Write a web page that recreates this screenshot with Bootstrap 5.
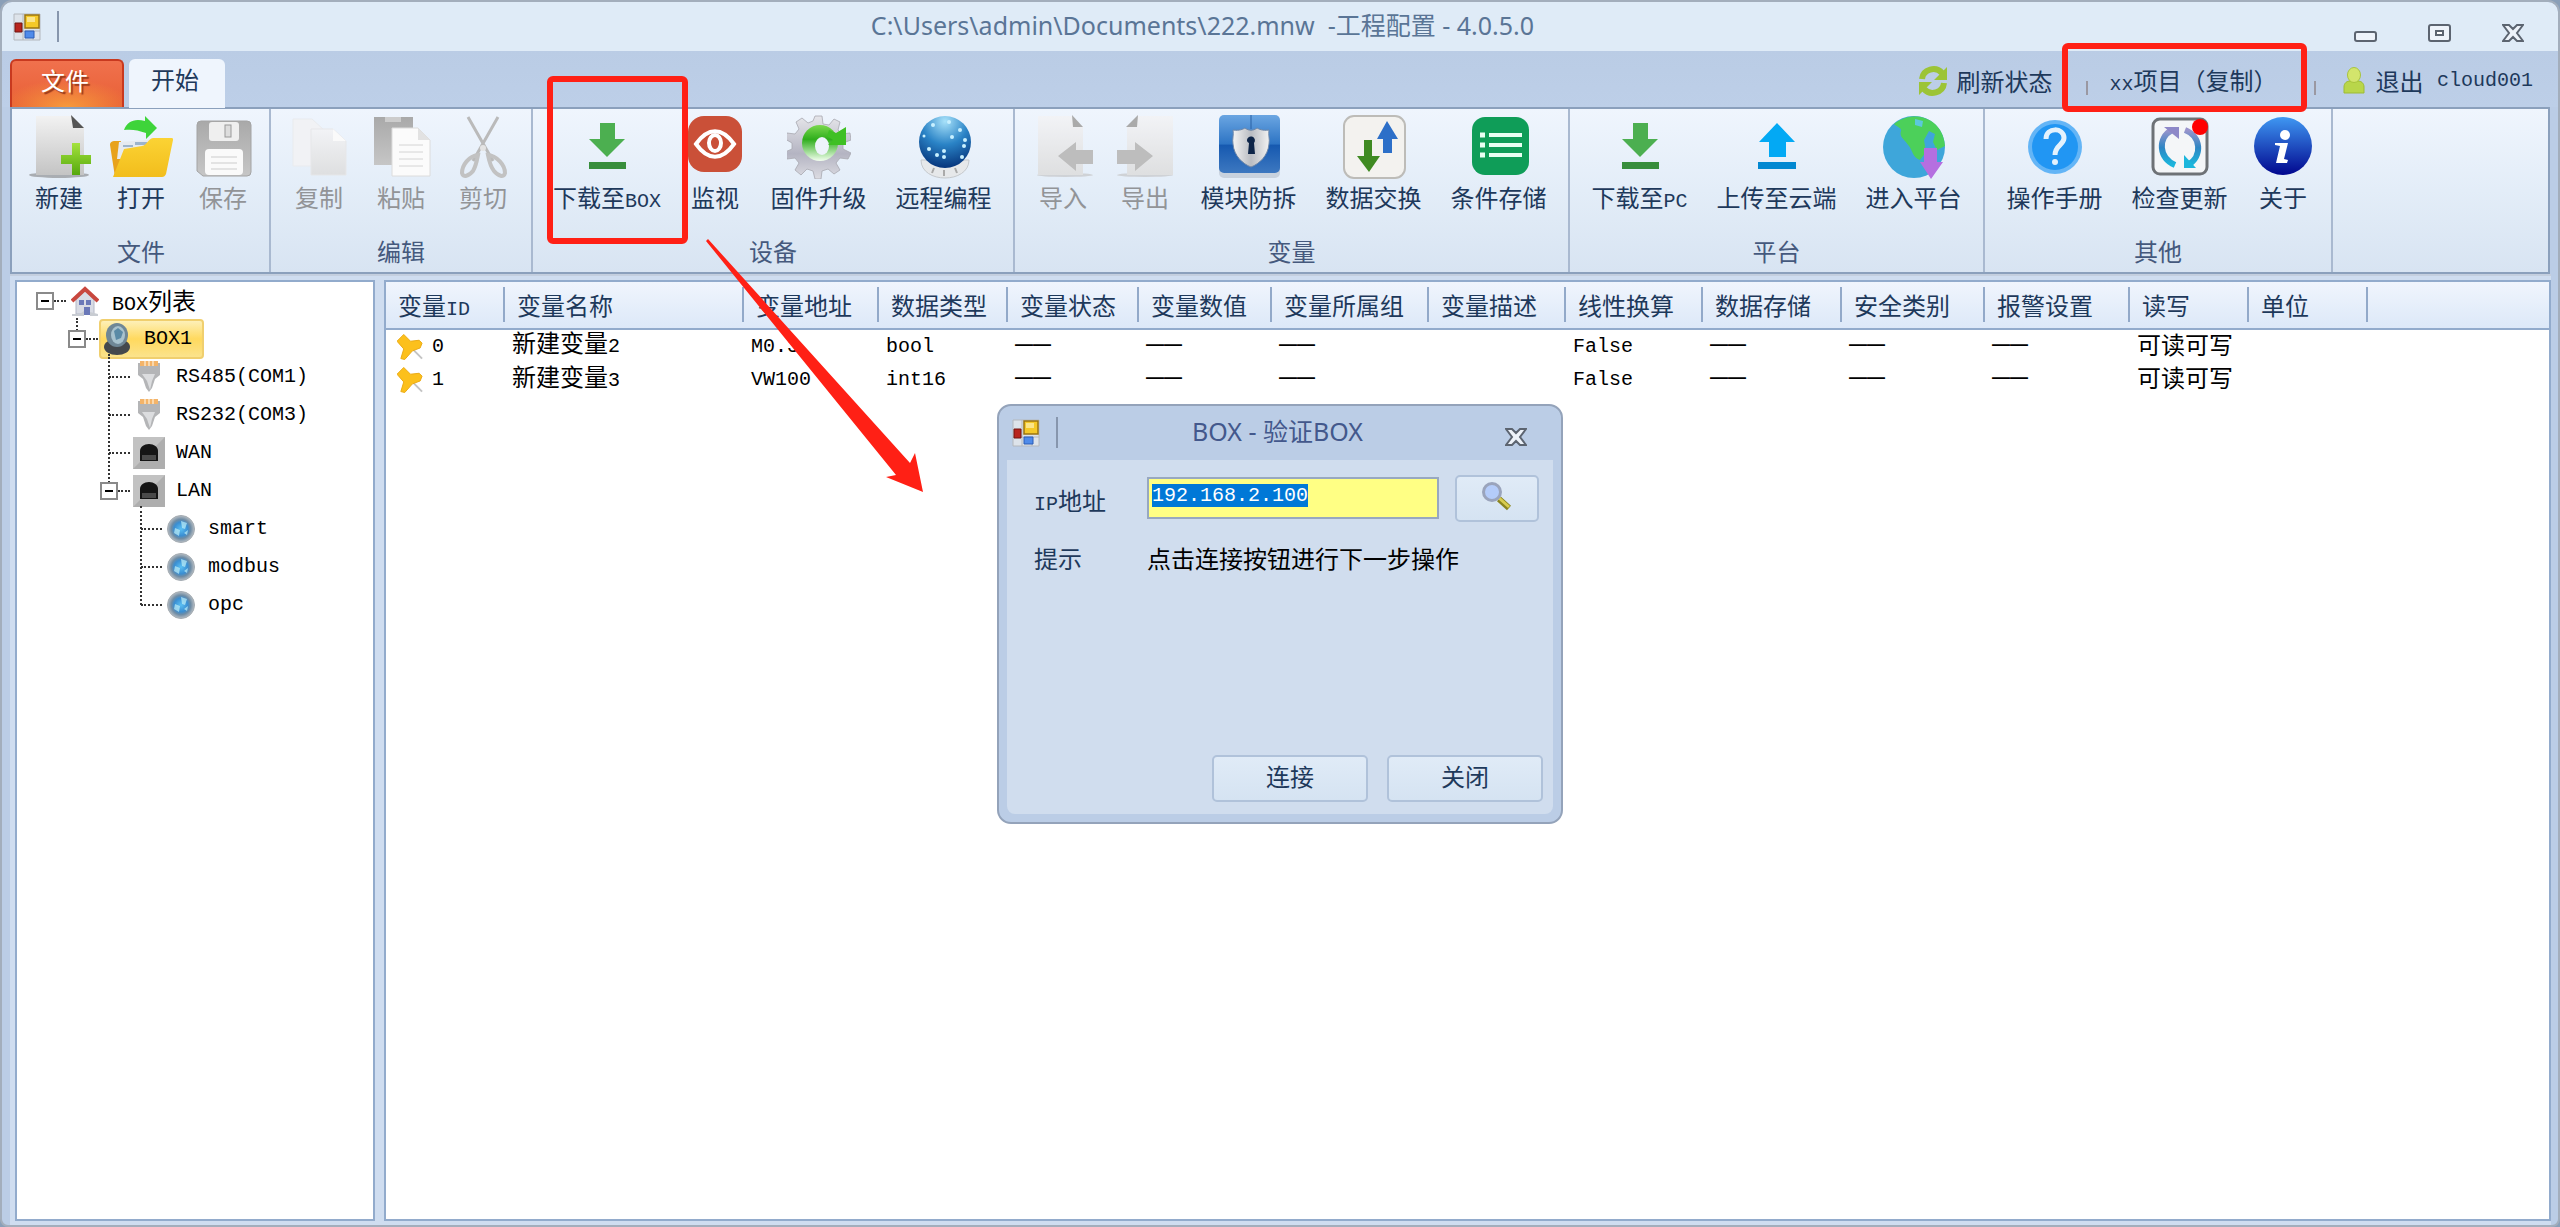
<!DOCTYPE html>
<html lang="zh-CN">
<head>
<meta charset="utf-8">
<meta name="viewport" content="width=device-width, initial-scale=1">
<title>工程配置 - 4.0.5.0</title>
<link rel="stylesheet" href="https://cdn.jsdelivr.net/npm/bootstrap@5.3.0/dist/css/bootstrap.min.css">
<style>
  :root { --ink:#1e395b; --line:#8ba0bc; --frame:#bbcde6; --soft:#cfddf0; --mark:#ff2015; }
  body { font-family:"Noto Sans CJK SC",sans-serif; font-size:24px; line-height:24px; color:var(--ink); background:#8a9fb8; }
  button { font:inherit; color:inherit; background:none; border:0; padding:0; }
  svg { display:block; flex:none; }
  .lat { font-family:"Liberation Mono",monospace; font-size:20px; line-height:20px; }
  .app-window { background:var(--frame); border:2px solid #a3aebc; border-radius:12px 12px 8px 8px; }
  .title-bar { height:49px; background:#dfebf7; border-radius:10px 10px 0 0; padding:0 34px 0 11px; }
  .title-text { font-family:"Noto Sans","Noto Sans CJK SC",sans-serif; font-size:25px; color:#5a7596; white-space:pre; padding:0 8px 4px 0; }
  .grip { width:2px; height:31px; background:#8796ad; }
  .win-btns { gap:50px; padding-top:12px; }
  .tab-row { height:56px; background:linear-gradient(#bacce5,#bdcfe8); padding:8px 25px 0 8px; }
  .file-tab { width:114px; height:48px; color:#fff; text-shadow:2px 2px 1px #9a3a1a; border:2px solid #c8391f; border-bottom:0; border-radius:6px 6px 0 0; background:radial-gradient(ellipse 60% 60% at 50% 100%,#f79a3c,transparent),linear-gradient(#f0714d,#e85f35); padding:0 4px 8px 0; }
  .home-tab { width:96px; height:49px; background:#eff5fd; border-radius:6px 6px 0 0; margin-left:5px; padding:0 4px 10px 0; position:relative; z-index:1; }
  .user-area { padding-bottom:4px; }
  .sep { width:2px; height:14px; background:#9a98a2; margin-top:14px; }
  .refresh { margin-right:33px; }
  .callout { position:absolute; border:6px solid var(--mark); border-radius:6px; pointer-events:none; z-index:5; }
  .project-name { position:relative; margin:0 36px 0 22px; }
  .project-name .callout { inset:-25px -29px -17px -48px; }
  .ribbon { height:167px; margin:0 8px; border:2px solid var(--line); background:linear-gradient(#eff5fd,#e3edf8 50%,#d8e4f2); }
  .tool-group { flex:none; border-right:2px solid #a9b9d0; padding:6px 7px 9px; }
  .tool-group:first-child { padding-left:6px; padding-right:5px; }
  .tool { width:82px; height:120px; position:relative; white-space:nowrap; display:flex; flex-direction:column; align-items:center; gap:6px; }
  .tool:disabled { color:#929497; }
  .tool.wide { width:125px; }
  .tool.box-tool { width:134px; }
  .tool.cloud-tool { width:149px; }
  .tool .callout { inset:-39px -14px -9px 7px; }
  .caption { color:#45597d; }
  .work { background:var(--soft); margin:0 7px 0 8px; padding:4px 0 4px 5px; gap:9px; border-top:2px solid #c4cfdf; }
  .pane { background:#fff; border:2px solid #92abcc; }
  .tree-pane { width:360px; flex:none; }
  .tree-row { height:38px; color:#000; padding-left:19px; }
  .tree-row .expander { width:18px; height:18px; border:2px solid #8a8a8a; background:#fff; position:relative; flex:none; z-index:1; }
  .expander::after { content:""; position:absolute; left:3px; right:3px; top:6px; height:2px; background:#000; }
  .stub { width:12px; border-top:2px dotted #333; margin-right:3px; flex:none; }
  .leaf-stub { width:21px; margin-left:9px; }
  .node-icon { width:32px; flex:none; display:flex; justify-content:center; margin-right:11px; }
  .branch { margin-left:32px; position:relative; }
  .branch::before { content:""; position:absolute; left:27px; width:0; top:-4px; border-left:2px dotted #333; }
  .branch.b1::before { height:16px; top:-2px; }
  .branch.b2::before { height:133px; }
  .branch.b3::before { height:99px; }
  .chosen { background:linear-gradient(#fdf0b8,#ffd95e 50%,#fbe38c); border:2px solid #f0cf6e; border-radius:4px; height:40px; padding-right:10px; margin-left:-2px; }
  .var-table { table-layout:fixed; width:100%; border-collapse:collapse; }
  .var-table thead { background:linear-gradient(#f0f5fd,#dce8f8); }
  .var-table tr.heads { border-bottom:2px solid #92abcc; }
  .var-table th { font-weight:400; padding:5px 0 6px; height:46px; white-space:nowrap; }
  .var-table th div { border-right:2px solid #92a9c9; height:35px; line-height:35px; padding-left:12px; }
  .var-table th:last-child div { border:0; }
  .var-table td { color:#000; height:34px; padding:0 0 6px 7px; white-space:nowrap; }
  .var-table td.lat, .var-table td.mark-cell { padding-bottom:0; }
  .var-table .dash { font-family:"Liberation Sans",sans-serif; font-size:18px; font-weight:700; }
  .dialog-box { width:566px; height:420px; background:var(--frame); border:2px solid #94a3ba; border-radius:14px; padding:0 8px 8px; z-index:6; display:flex; flex-direction:column; }
  .dialog-top { height:54px; padding:0 26px 0 5px; }
  .dialog-top .title-text { color:#43588c; }
  .dialog-main { background:#d0ddee; padding:15px 10px 12px 27px; border-radius:0 0 8px 8px; }
  .dialog-main .tag { width:113px; flex:none; }
  .dialog-main label.tag { padding-top:6px; }
  .ip-input { width:292px; height:42px; border:2px solid #98a8c0; background:#ffff84; padding:0 3px 5px; line-height:24px; color:#000; outline:0; }
  .ip-input::selection { background:#0078d7; color:#fff; }
  .flat-btn { height:47px; border:2px solid #b0c2da; border-radius:5px; background:linear-gradient(#e0ebf7,#d5e3f2); padding-bottom:4px; }
  .find-btn { width:84px; }
  .act-btn { width:156px; }
  .act-row { gap:19px; }
  .arrow-mark { position:absolute; left:698px; top:228px; z-index:5; pointer-events:none; }
</style>
<script src="https://cdn.jsdelivr.net/npm/bootstrap@5.3.0/dist/js/bootstrap.bundle.min.js"></script>
</head>
<body>
<svg width="0" height="0" class="position-absolute" aria-hidden="true">
  <defs>
    <linearGradient id="gPage" x2="0" y2="1"><stop stop-color="#f2f2f2"/><stop offset="1" stop-color="#c4c4c4"/></linearGradient>
    <linearGradient id="gPale" x2="0" y2="1"><stop stop-color="#f2f3f6"/><stop offset="1" stop-color="#dedfe0"/></linearGradient>
    <linearGradient id="gGrey" x2="0" y2="1"><stop stop-color="#a9a9a9"/><stop offset="1" stop-color="#c6c6c6"/></linearGradient>
    <linearGradient id="gLime" x2="0" y2="1"><stop stop-color="#a4e23c"/><stop offset="1" stop-color="#55a80e"/></linearGradient>
    <linearGradient id="gFold" x2="0" y2="1"><stop stop-color="#fbd334"/><stop offset="1" stop-color="#f2bd1c"/></linearGradient>
    <linearGradient id="gGear" x2="0" y2="1"><stop stop-color="#e6e6ea"/><stop offset=".6" stop-color="#b4b4c2"/><stop offset="1" stop-color="#dcdce2"/></linearGradient>
    <linearGradient id="gArc" x2="0" y2="1"><stop stop-color="#7bd84e"/><stop offset=".4" stop-color="#2fae1c"/><stop offset="1" stop-color="#f4fff0"/></linearGradient>
    <radialGradient id="gBall" cy=".1" r=".9"><stop stop-color="#a8e2fa"/><stop offset=".5" stop-color="#2a83c6"/><stop offset="1" stop-color="#06357c"/></radialGradient>
    <linearGradient id="gShield" x2="0" y2="1"><stop stop-color="#6ba6e2"/><stop offset=".5" stop-color="#2d74c4"/><stop offset=".52" stop-color="#1659b0"/><stop offset="1" stop-color="#3d78c0"/></linearGradient>
    <linearGradient id="gInfo" x2="0" y2="1"><stop stop-color="#3f97f2"/><stop offset="1" stop-color="#01068e"/></linearGradient>
    <linearGradient id="gSteel"><stop stop-color="#f4f4f4"/><stop offset=".5" stop-color="#b9bcc2"/><stop offset="1" stop-color="#f2f2f2"/></linearGradient>
    <linearGradient id="gCycle" x2="0" y2="1"><stop stop-color="#9a94cc"/><stop offset=".5" stop-color="#2e86c4"/><stop offset="1" stop-color="#1cb6dc"/></linearGradient>
    <radialGradient id="gNode"><stop stop-color="#5ac0f4"/><stop offset=".5" stop-color="#3a8ed2"/><stop offset=".72" stop-color="#6f8ca4"/><stop offset="1" stop-color="#b8bec4"/></radialGradient>
    <symbol id="app" viewBox="0 0 28 28"><path fill="#dde3ea" stroke="#b4b8bd" d="M1 1h26v26H1z"/><path stroke="#b4b8bd" d="M10 1v26M1 18h26M20 18v9"/><path fill="#f5c928" stroke="#9a7410" stroke-width="1.500" d="M12 2h14v13H12z"/><path fill="#fbe58a" d="M14 4h8v5h-8z"/><path fill="#b8241e" stroke="#701410" d="M2 10h7v9H2z"/><path fill="#4f8bea" stroke="#2c5cb4" d="M12 18h9v7h-9z"/></symbol>
    <symbol id="down" viewBox="0 0 64 64"><path fill="#4caf50" d="M25 8h15v16h10L32 42 14 24h11z"/><path fill="#388e3c" d="M14 47h37v7H14z"/></symbol>
    <symbol id="cross" viewBox="0 0 22 18"><path fill="#eef3fa" stroke="#5c6470" stroke-width="2" d="M1 1h6l4 4 4-4h6l-6 8 6 8h-6l-4-4-4 4H1l6-8z"/></symbol>
    <symbol id="plug" viewBox="0 0 24 32"><path fill="#b4b5b7" d="M1 2h22v12l-5 4-3 9-3 4-3-4-3-9-5-4z"/><path fill="#dcdddf" d="M5 13h13l-3 7-2 9-3-9z"/><path fill="#f4b469" d="M3 0h18v5H3z"/><path stroke="#fbe3c4" stroke-width="1.500" d="M8 0v5M12 0v5M16 0v5"/></symbol>
    <symbol id="port" viewBox="0 0 32 32"><path fill="#aeaeae" d="M0 0h32v32H0z"/><path fill="#cfcfcf" d="M0 0h32L0 32z" opacity=".6"/><path fill="#151515" d="M7 24V14c0-4 4-7 9-7s9 3 9 7v10z"/><path fill="#4a4a4a" d="M9 18h14v5H9z"/></symbol>
    <symbol id="node" viewBox="0 0 28 28"><circle cx="14" cy="14" r="13.500" fill="url(#gNode)" stroke="#a4acb2"/><path fill="#bff0f8" d="M14 6l6 2-2 6-3-1zm-6 7l5 2-1 6-5-3zm9 5l4-3-1 5z" opacity=".7"/></symbol>
    <symbol id="pin" viewBox="0 0 28 28"><path stroke="#c4c4c4" stroke-width="2" d="M16 16l10 10"/><path fill="#fcc01c" stroke="#eaa912" d="M7 1l7 7 9-1 3 3-2 5-8 3-8 9-4-1 3-10-7-8z"/></symbol>
    <symbol id="gear" viewBox="0 0 64 64"><path fill="url(#gGear)" stroke="#a8a8b0" stroke-width=".8" d="M28 1h7l1 8 6 1 5-6 6 3-2 8 4 4 8-1 1 7-8 3v6l8 4-3 6-8-1-4 5 4 7-6 4-6-5-6 2-1 8h-6l-2-8-6-2-6 6-6-5 4-7-4-5-8 1-2-7 7-3v-6l-7-4 2-6 8 1 4-5-3-7 6-4 6 5 5-2z"/><circle cx="33" cy="28" r="18" fill="url(#gArc)"/><ellipse cx="35" cy="31" rx="7" ry="9" fill="#eef3fb"/><path fill="#3fc024" d="M42 15l7 3 10-6v18H41l5-5-6-4z"/></symbol>
  </defs>
</svg>

<div class="app-window vh-100 d-flex flex-column position-relative overflow-hidden">
  <header class="title-bar d-flex align-items-center position-relative">
    <svg width="28" height="28"><use href="#app"/></svg>
    <span class="grip ms-3"></span>
    <span class="title-text flex-grow-1 text-center">C:\Users\admin\Documents\222.mnw  -工程配置 - 4.0.5.0</span>
    <div class="win-btns d-flex align-items-end">
      <button aria-label="最小化"><svg width="24" height="18"><rect x="1" y="8" width="21" height="9" rx="2" fill="#eef3fa" stroke="#5c6470" stroke-width="2"/></svg></button>
      <button aria-label="最大化"><svg width="24" height="18"><rect x="1" y="1" width="21" height="16" rx="2" fill="#eef3fa" stroke="#5c6470" stroke-width="2"/><rect x="8" y="7" width="7" height="4" fill="#fff" stroke="#5c6470" stroke-width="2"/></svg></button>
      <button aria-label="关闭窗口"><svg width="22" height="18"><use href="#cross"/></svg></button>
    </div>
  </header>

  <nav class="tab-row d-flex">
    <button class="file-tab">文件</button>
    <button class="home-tab">开始</button>
    <div class="user-area ms-auto d-flex align-items-center">
      <button class="refresh d-flex align-items-center gap-2"><svg width="32" height="32" viewBox="0 0 32 32"><path fill="none" stroke="#9cc436" stroke-width="6" d="M5 14C6 4 19 1 25 8M27 18c-1 10-14 13-20 6"/><path fill="#9cc436" d="M30 2v13H17zM2 30V17h13z"/></svg>刷新状态</button>
      <span class="sep"></span>
      <span class="project-name"><span class="lat">xx</span>项目（复制）<span class="callout"></span></span>
      <span class="sep"></span>
      <button class="d-flex align-items-center ms-4"><svg class="me-2" width="28" height="28" viewBox="0 0 28 28"><path fill="#b9d64a" stroke="#9dbb34" d="M4 26v-6c0-4 3-6 6-6h8c3 0 6 2 6 6v6z"/><ellipse cx="14" cy="8" rx="6.500" ry="7.500" fill="#d3e56c" stroke="#a8c43c"/></svg><span>退出&nbsp;</span><span class="lat ms-2">cloud001</span></button>
    </div>
  </nav>

  <section class="ribbon d-flex">
    <div class="tool-group d-flex flex-column justify-content-between">
      <div class="d-flex">
        <button class="tool"><svg width="64" height="64"><ellipse cx="32" cy="60" rx="30" ry="3" fill="#a9adb2"/><path fill="url(#gPage)" d="M9 1h36l12 12v47H9z"/><path fill="#555" d="M44 0l13 13H46z"/><path fill="url(#gLime)" d="M45 28h8v12h11v9H53v11h-8V49H34v-9h11z"/></svg><span>新建</span></button>
        <button class="tool"><svg width="64" height="64"><path fill="#e8a21c" d="M1 30c0-3 2-4 5-4h6v36H6z"/><path fill="#e6eaf0" d="M10 27l42-3v20H8z"/><path fill="#9db4cc" d="M14 30h10v2H14zm12-3h12v3H26z"/><path fill="url(#gFold)" d="M4 62l11-28 18-3c5-1 6-7 11-8h19c1 0 1 1 1 2l-7 34c-1 2-2 3-4 3z"/><path fill="#3ed43a" d="M15 15C18 6 26 3 36 6V1l12 12-11 11v-6c-8-3-15-4-22-3z"/></svg><span>打开</span></button>
        <button class="tool" disabled><svg width="64" height="64"><path fill="url(#gGrey)" stroke="#a4a4a4" d="M6 10a4 4 0 0 1 4-4h46a4 4 0 0 1 4 4v47a4 4 0 0 1-4 4H12l-6-5z"/><rect x="18" y="7" width="30" height="19" rx="3" fill="#efefef"/><rect x="34" y="10" width="6" height="12" fill="#ddd" stroke="#999"/><rect x="14" y="34" width="38" height="26" rx="4" fill="#fafafa"/><path stroke="#ccc" d="M20 42h26M20 48h26M20 54h26"/></svg><span>保存</span></button>
      </div>
      <div class="caption text-center">文件</div>
    </div>
    <div class="tool-group d-flex flex-column justify-content-between">
      <div class="d-flex">
        <button class="tool" disabled><svg width="64" height="64"><path fill="#f1f2f5" stroke="#e9ebee" d="M6 4h19l12 11v36H6z"/><path fill="url(#gPale)" stroke="#e6e7e9" d="M24 14h22l13 12v34H24z"/><path fill="#fafafa" d="M46 14v12h13z"/></svg><span>复制</span></button>
        <button class="tool" disabled><svg width="64" height="64"><path fill="url(#gGrey)" d="M5 2h39v48H5z"/><path fill="#ccc" d="M16 2h16v5H16z"/><path fill="#fbfbfb" stroke="#dcdcdc" d="M23 13h26l12 12v36H23z"/><path fill="#e2e2e2" d="M49 13v12h12z"/><path stroke="#d4d4d4" d="M30 30h24M30 37h24M30 44h24M30 51h24"/></svg><span>粘贴</span></button>
        <button class="tool" disabled><svg width="64" height="64"><path fill="none" stroke="#bababa" stroke-width="3" d="M17 2l25 44M47 2L22 46"/><path fill="none" stroke="#c2c2c2" stroke-width="4" d="M27 40c-9 1-16 10-16 18 1 5 7 3 11-2 3-5 4-11 5-16zM37 40c9 1 17 10 17 18-1 5-7 3-11-2-4-5-5-11-6-16z"/><circle cx="32" cy="33" r="3" fill="#e4e4e4"/></svg><span>剪切</span></button>
      </div>
      <div class="caption text-center">编辑</div>
    </div>
    <div class="tool-group d-flex flex-column justify-content-between">
      <div class="d-flex">
        <button class="tool box-tool"><svg width="64" height="64"><use href="#down"/></svg><span>下载至<span class="lat">BOX</span></span><span class="callout"></span></button>
        <button class="tool"><svg width="64" height="64"><rect x="5" y="1" width="54" height="56" rx="16" fill="#ca5038"/><path fill="none" stroke="#fff" stroke-width="4" d="M13 29c12-17 26-17 38 0-12 17-26 17-38 0z"/><ellipse cx="32" cy="28" rx="6" ry="8" fill="none" stroke="#fff" stroke-width="4"/></svg><span>监视</span></button>
        <button class="tool wide"><svg width="64" height="64"><use href="#gear"/></svg><span>固件升级</span></button>
        <button class="tool wide"><svg width="64" height="64"><path fill="#e6e8ea" stroke="#c4c8cc" d="M9 45h48c0 24-48 24-48 0z"/><path stroke="#aaa" stroke-width="2" d="M20 58l2-5M32 61v-6M45 58l-2-5"/><circle cx="33" cy="27" r="26" fill="url(#gBall)"/><g fill="#c8f0ff"><circle cx="21" cy="10" r="2"/><circle cx="37" cy="7" r="2"/><circle cx="48" cy="15" r="2"/><circle cx="40" cy="22" r="2"/><circle cx="53" cy="25" r="2"/><circle cx="52" cy="31" r="2"/><circle cx="17" cy="34" r="2"/><circle cx="25" cy="40" r="2"/><circle cx="32" cy="36" r="2"/><circle cx="32" cy="42" r="2"/><circle cx="50" cy="42" r="2"/><circle cx="12" cy="21" r="1.500"/></g></svg><span>远程编程</span></button>
      </div>
      <div class="caption text-center">设备</div>
    </div>
    <div class="tool-group d-flex flex-column justify-content-between">
      <div class="d-flex">
        <button class="tool" disabled><svg width="64" height="64"><ellipse cx="34" cy="60" rx="28" ry="2" fill="#cfd2d6"/><path fill="url(#gPale)" d="M7 1h34l11 11v48H7z"/><path fill="#aaa" d="M41 0l11 12H42z"/><path fill="#bdbdbd" d="M27 41l18-14v8h17v14H45v7z"/></svg><span>导入</span></button>
        <button class="tool" disabled><svg width="64" height="64"><ellipse cx="32" cy="60" rx="28" ry="2" fill="#cfd2d6"/><path fill="url(#gPale)" d="M14 12L25 1h35v59H14z"/><path fill="#aaa" d="M25 0L13 12h11z"/><path fill="#bdbdbd" d="M40 41L22 27v8H4v14h18v7z"/></svg><span>导出</span></button>
        <button class="tool wide"><svg width="64" height="64"><rect x="2" y="3" width="61" height="60" rx="5" fill="#c8d2de"/><rect x="2" y="0" width="61" height="58" rx="5" fill="url(#gShield)"/><path stroke="#2a60a4" d="M34 0v14"/><path fill="url(#gSteel)" stroke="#6e87a8" d="M16 15c7 1 10-1 12-2 4 3 8 3 12 0 2 1 5 3 12 2-1 5 1 9 0 14-1 12-10 20-18 23-8-3-17-11-18-23-1-5 1-9 0-14z"/><path fill="#0e2548" d="M30 26a4 4 0 1 1 7 2l1 11h-7l1-11a4 4 0 0 1-2-2z"/></svg><span>模块防拆</span></button>
        <button class="tool wide"><svg width="64" height="64"><rect x="2" y="1" width="61" height="62" rx="10" fill="#f3f2ef" stroke="#bdbcb8" stroke-width="2"/><path fill="#3f8a22" d="M22 25h8v16h8L27 57 15 41h7z"/><path fill="#2c6fc8" d="M45 6l11 18h-6v14h-9V24h-6z"/></svg><span>数据交换</span></button>
        <button class="tool wide"><svg width="64" height="64"><rect x="5" y="2" width="57" height="58" rx="13" fill="#0f9d58"/><path stroke="#e8fff2" stroke-width="4" d="M22 20h33M22 30h33M22 40h33"/><path stroke="#e8fff2" stroke-width="5" d="M13 20h5M13 30h5M13 40h5"/></svg><span>条件存储</span></button>
      </div>
      <div class="caption text-center">变量</div>
    </div>
    <div class="tool-group d-flex flex-column justify-content-between">
      <div class="d-flex">
        <button class="tool wide"><svg width="64" height="64"><use href="#down"/></svg><span>下载至<span class="lat">PC</span></span></button>
        <button class="tool cloud-tool"><svg width="64" height="64"><path fill="#03a9f4" d="M32 8l18 19H41v15H24V27H14z"/><path fill="#0288d1" d="M13 47h38v7H13z"/></svg><span>上传至云端</span></button>
        <button class="tool wide"><svg width="64" height="64"><circle cx="32" cy="32" r="31" fill="#3ea6da"/><path fill="#4cd05a" d="M12 9C24-1 42-1 53 9c6 6 9 12 10 22l-8 4-4-8 2-8-6-3-5 9 2 12-6 8c-8-3-7-9-11-14-5-7-10-9-8-15 1-3-4-4-7-7z"/><path fill="#5cc8dc" d="M33 4l8 2-1 6-7-2z"/><path fill="#b56fe0" d="M42 33h13v14h6L49 64 38 47h4z"/></svg><span>进入平台</span></button>
      </div>
      <div class="caption text-center">平台</div>
    </div>
    <div class="tool-group d-flex flex-column justify-content-between">
      <div class="d-flex">
        <button class="tool wide"><svg width="64" height="64"><circle cx="32" cy="32" r="27" fill="#64b5f6"/><circle cx="32" cy="32" r="23" fill="#2196f3"/><path fill="none" stroke="#e3f2fd" stroke-width="5" d="M23 24c0-12 18-12 18-1 0 7-9 7-9 17"/><circle cx="32" cy="47" r="3" fill="#e3f2fd"/></svg><span>操作手册</span></button>
        <button class="tool wide"><svg width="64" height="64"><rect x="5" y="4" width="54" height="55" rx="7" fill="#f4f6f8" stroke="#6e7276" stroke-width="3"/><path fill="none" stroke="url(#gCycle)" stroke-width="6" d="M27 50C11 43 9 23 24 15M37 15c16 6 18 26 3 35"/><path fill="#8d88c8" d="M16 12h15v12z"/><path fill="#1cb6dc" d="M36 40v13h12z"/><circle cx="52" cy="12" r="8" fill="#f00"/></svg><span>检查更新</span></button>
        <button class="tool"><svg width="64" height="64"><circle cx="32" cy="31" r="29" fill="url(#gInfo)"/><circle cx="34" cy="20" r="5" fill="#fff"/><path fill="#fff" d="M24 28h13l-4 16 4 1-1 3H25l4-17-5-1z"/></svg><span>关于</span></button>
      </div>
      <div class="caption text-center">其他</div>
    </div>
  </section>

  <main class="work d-flex flex-grow-1">
    <aside class="pane tree-pane">
      <div class="tree-row d-flex align-items-center"><span class="expander"></span><span class="stub"></span><span class="node-icon"><svg width="28" height="30" viewBox="0 0 28 30"><path fill="#d8dbe4" stroke="#b4b8c6" d="M5 14L14 4l9 10v14H5z"/><path fill="none" stroke="#c8473e" stroke-width="4" d="M1 15L14 3l13 12"/><path fill="#6a78b8" d="M8 14h5v5H8zm7 0h5v5h-5zM13 21h6v8h-6z"/><path fill="#c8ccd2" d="M1 28h8l4-3v5H1zM19 26l8 2v2h-8z"/></svg></span><span><span class="lat">BOX</span>列表</span></div>
      <div class="branch b1">
        <div class="tree-row d-flex align-items-center"><span class="expander"></span><span class="stub"></span><span class="chosen d-flex align-items-center"><span class="node-icon"><svg width="26" height="32" viewBox="0 0 26 32"><ellipse cx="13" cy="24" rx="13" ry="8" fill="#44484c"/><ellipse cx="13" cy="12" rx="11" ry="12" fill="#6f8796"/><ellipse cx="14" cy="12" rx="7" ry="9" fill="#a8c2ce"/><path fill="#5a8aa6" d="M10 8l4-3 5 4-2 6-5 2z"/></svg></span><span class="lat">BOX1</span></span></div>
        <div class="branch b2">
          <div class="tree-row d-flex align-items-center"><span class="stub leaf-stub"></span><span class="node-icon"><svg width="24" height="32"><use href="#plug"/></svg></span><span class="lat">RS485(COM1)</span></div>
          <div class="tree-row d-flex align-items-center"><span class="stub leaf-stub"></span><span class="node-icon"><svg width="24" height="32"><use href="#plug"/></svg></span><span class="lat">RS232(COM3)</span></div>
          <div class="tree-row d-flex align-items-center"><span class="stub leaf-stub"></span><span class="node-icon"><svg width="32" height="32"><use href="#port"/></svg></span><span class="lat">WAN</span></div>
          <div class="tree-row d-flex align-items-center"><span class="expander"></span><span class="stub"></span><span class="node-icon"><svg width="32" height="32"><use href="#port"/></svg></span><span class="lat">LAN</span></div>
          <div class="branch b3">
            <div class="tree-row d-flex align-items-center"><span class="stub leaf-stub"></span><span class="node-icon"><svg width="28" height="28"><use href="#node"/></svg></span><span class="lat">smart</span></div>
            <div class="tree-row d-flex align-items-center"><span class="stub leaf-stub"></span><span class="node-icon"><svg width="28" height="28"><use href="#node"/></svg></span><span class="lat">modbus</span></div>
            <div class="tree-row d-flex align-items-center"><span class="stub leaf-stub"></span><span class="node-icon"><svg width="28" height="28"><use href="#node"/></svg></span><span class="lat">opc</span></div>
          </div>
        </div>
      </div>
    </aside>
    <section class="pane flex-grow-1">
      <table class="var-table">
        <colgroup><col style="width:119px"><col style="width:239px"><col style="width:135px"><col style="width:129px"><col style="width:131px"><col style="width:133px"><col style="width:157px"><col style="width:137px"><col style="width:137px"><col style="width:139px"><col style="width:143px"><col style="width:145px"><col style="width:119px"><col style="width:119px"><col></colgroup>
        <thead><tr class="heads"><th><div>变量<span class="lat">ID</span></div></th><th><div>变量名称</div></th><th><div>变量地址</div></th><th><div>数据类型</div></th><th><div>变量状态</div></th><th><div>变量数值</div></th><th><div>变量所属组</div></th><th><div>变量描述</div></th><th><div>线性换算</div></th><th><div>数据存储</div></th><th><div>安全类别</div></th><th><div>报警设置</div></th><th><div>读写</div></th><th><div>单位</div></th><th><div></div></th></tr></thead>
        <tbody>
          <tr><td class="mark-cell"><div class="d-flex align-items-center gap-2"><svg class="ms-1" width="27" height="28"><use href="#pin"/></svg><span class="lat">0</span></div></td><td>新建变量<span class="lat">2</span></td><td class="lat">M0.3</td><td class="lat">bool</td><td class="dash">——</td><td class="dash">——</td><td class="dash">——</td><td></td><td class="lat">False</td><td class="dash">——</td><td class="dash">——</td><td class="dash">——</td><td>可读可写</td><td></td><td></td></tr>
          <tr><td class="mark-cell"><div class="d-flex align-items-center gap-2"><svg class="ms-1" width="27" height="28"><use href="#pin"/></svg><span class="lat">1</span></div></td><td>新建变量<span class="lat">3</span></td><td class="lat">VW100</td><td class="lat">int16</td><td class="dash">——</td><td class="dash">——</td><td class="dash">——</td><td></td><td class="lat">False</td><td class="dash">——</td><td class="dash">——</td><td class="dash">——</td><td>可读可写</td><td></td><td></td></tr>
        </tbody>
      </table>
    </section>
  </main>

  <form class="dialog-box position-absolute top-50 start-50 translate-middle" role="dialog" aria-labelledby="dlgTitle" onsubmit="return false">
    <div class="dialog-top d-flex align-items-center">
      <svg width="28" height="28"><use href="#app"/></svg><span class="grip ms-3"></span>
      <span id="dlgTitle" class="title-text flex-grow-1 text-center">BOX - 验证BOX</span>
      <button type="button" class="pt-2" aria-label="关闭对话框"><svg width="22" height="18"><use href="#cross"/></svg></button>
    </div>
    <div class="dialog-main flex-grow-1 d-flex flex-column">
      <div class="d-flex align-items-center">
        <label class="tag" for="ip"><span class="lat">IP</span>地址</label>
        <input id="ip" class="ip-input lat" type="text" value="192.168.2.100">
        <button type="button" class="flat-btn find-btn ms-3 d-flex align-items-center justify-content-center" aria-label="查找"><svg width="30" height="30" viewBox="0 0 30 30"><path stroke="#8a8420" stroke-width="6" d="M17 18l10 9"/><path stroke="#d8cc50" stroke-width="3" d="M17 17l10 9"/><circle cx="10" cy="11" r="8.500" fill="#b4ccfa" stroke="#9aa4bc" stroke-width="3"/></svg></button>
      </div>
      <div class="d-flex pt-4 text-nowrap"><span class="tag">提示</span><span class="text-black">点击连接按钮进行下一步操作</span></div>
      <div class="act-row mt-auto d-flex justify-content-end">
        <button type="submit" class="flat-btn act-btn">连接</button>
        <button type="button" class="flat-btn act-btn">关闭</button>
      </div>
    </div>
  </form>

  <svg class="arrow-mark" width="230" height="266" viewBox="700 230 230 266"><path fill="#ff2015" d="M706 241l2-2 202 224 5-10 8 39-37-15 10-2z"/></svg>
</div>
<script>
  const ip = document.getElementById('ip');
  ip.focus({ preventScroll: true });
  ip.select();
</script>
</body>
</html>
